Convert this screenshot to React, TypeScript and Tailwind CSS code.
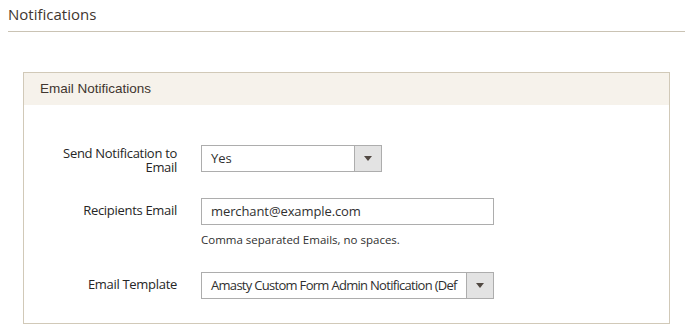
import React from 'react';

const open = "font-['Open_Sans',sans-serif]";

function Arrow() {
  return (
    <span className="flex w-[27px] shrink-0 items-center justify-center border-l border-[#adadad] bg-[#e3e3e3]">
      <span className="h-0 w-0 border-x-[4px] border-t-[5px] border-x-transparent border-t-[#514943]" />
    </span>
  );
}

function Row({ label, top = 'pt-[5px]', children }: { label: React.ReactNode; top?: string; children: React.ReactNode }) {
  return (
    <div className="flex items-start">
      <div className={`h-[27px] w-[153px] shrink-0 ${top} text-right text-[13px] leading-[14px] tracking-[-0.3px] text-[#262626]`}>
        {label}
      </div>
      <div className="ml-[24px]">{children}</div>
    </div>
  );
}

export default function App() {
  return (
    <div className={`${open} h-[329px] w-[685px] overflow-hidden bg-white pl-[8px]`}>
      <div className="flex h-[32px] items-center border-b border-[#cac3b4] pb-[3px] text-[15px] text-[#41362f]">
        Notifications
      </div>
      <div className="mr-[15px] mt-[40px] ml-[15px] border border-[#d1c9b8]">
        <div className="flex h-[32px] items-center bg-[#f6f2eb] pl-[16px] font-['Liberation_Sans',sans-serif] text-[13.5px] text-[#41362f]">
          Email Notifications
        </div>
        <div className="flex flex-col pb-[24px] pt-[40px]">
          <Row
            top="pt-[1px]"
            label={
              <>
                Send Notification to
                <br />
                Email
              </>
            }
          >
            <div className="flex h-[27px] w-[181px] border border-[#adadad] text-[13px] text-[#303030]">
              <span className="flex flex-1 items-center pl-[9px]">Yes</span>
              <Arrow />
            </div>
          </Row>
          <div className="mt-[26px]">
            <Row label="Recipients Email">
              <div className="flex h-[27px] w-[293px] items-center border border-[#adadad] pl-[9px] text-[13px] tracking-[-0.1px] text-[#303030]">
                merchant@example.com
              </div>
              <div className="mt-[6px] text-[11.5px] text-[#303030]">Comma separated Emails, no spaces.</div>
            </Row>
          </div>
          <div className="mt-[24px]">
            <Row label="Email Template">
              <div className="flex h-[27px] w-[293px] border border-[#adadad] text-[13px] text-[#303030]">
                <span className="flex flex-1 items-center overflow-hidden whitespace-nowrap pl-[9px] tracking-[-0.7px]">
                  Amasty Custom Form Admin Notification (Def
                </span>
                <Arrow />
              </div>
            </Row>
          </div>
        </div>
      </div>
    </div>
  );
}
